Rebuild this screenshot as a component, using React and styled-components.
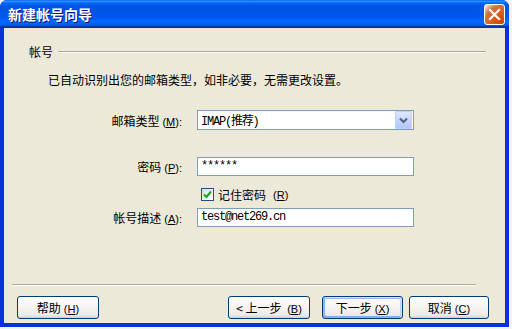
import styled, { createGlobalStyle } from 'styled-components';

const Global = createGlobalStyle`
  html, body { margin: 0; padding: 0; background: #f4f4f4; }
  body { font-family: "Noto Sans CJK SC", "Liberation Sans", sans-serif; font-size: 12px; color: #000; }
`;

function App() {
  return (<>
    <Global />
    <Window>
      <TitleBar>
        <Title>新建帐号向导</Title>
        <CloseButton aria-label="关闭">
          <svg width="13" height="13" viewBox="0 0 13 13">
            <path d="M2 2 L11 11 M11 2 L2 11" stroke="#fff" strokeWidth="2.2" strokeLinecap="square" />
          </svg>
        </CloseButton>
      </TitleBar>

      <Body>
        <GroupHeader>
          <GroupLabel>帐号</GroupLabel>
          <GroupLine />
        </GroupHeader>

        <Intro>已自动识别出您的邮箱类型，如非必要，无需更改设置。</Intro>

        <Form>
          <Row>
            <Label>邮箱类型<Key>(<u>M</u>):</Key></Label>
            <Select>
              <FieldText>IMAP(推荐)</FieldText>
              <DropButton>
                <svg width="9" height="7" viewBox="0 0 9 7">
                  <path d="M1 1.5 L4.5 5 L8 1.5" stroke="#4d6185" strokeWidth="2" fill="none" />
                </svg>
              </DropButton>
            </Select>
          </Row>

          <Row $top={26}>
            <Label>密码<Key>(<u>P</u>):</Key></Label>
            <Input><FieldText>******</FieldText></Input>
          </Row>

          <Row $top={12} $height={13}>
            <Label />
            <Check>
              <Box>
                <svg width="9" height="9" viewBox="0 0 9 9">
                  <path d="M1 4.5 L3.5 7 L8 1.5" stroke="#21a121" strokeWidth="2" fill="none" />
                </svg>
              </Box>
              记住密码<Key>(<u>R</u>)</Key>
            </Check>
          </Row>

          <Row $top={6}>
            <Label>帐号描述<Key>(<u>A</u>):</Key></Label>
            <Input><FieldText>test@net269.cn</FieldText></Input>
          </Row>
        </Form>

        <Separator />

        <Buttons>
          <Button>帮助<Key>(<u>H</u>)</Key></Button>
          <Spacer />
          <Button>&lt; 上一步 <Key>(<u>B</u>)</Key></Button>
          <Button $default $gap={12} $width={81}>下一步<Key>(<u>X</u>)</Key></Button>
          <Button $gap={6} $width={80}>取消<Key>(<u>C</u>)</Key></Button>
        </Buttons>
      </Body>
    </Window>
  </>);
}

export default App;


const Window = styled.div`
  width: 509px;
  height: 327px;
  display: flex;
  flex-direction: column;
  background: #0831d9;
  border-radius: 7px 7px 0 0;
  overflow: hidden;
`
const TitleBar = styled.div`
  height: 28px;
  flex: none;
  display: flex;
  align-items: center;
  justify-content: space-between;
  padding: 0 4px 0 8px;
  background: linear-gradient(180deg, #0058ee 0%, #3593ff 4%, #288eff 6%, #127dff 8%, #036ffc 10%, #0262ee 14%, #0057e5 20%, #0054e3 24%, #0055eb 56%, #005bf5 66%, #026afe 76%, #0062ef 86%, #0052d6 92%, #0040ab 94%, #003092 100%);
`
const Title = styled.span`
  color: #fff;
  font-weight: bold;
  font-size: 14px;
  text-shadow: 1px 1px #0f1089;
`
const CloseButton = styled.button`
  width: 21px;
  height: 21px;
  padding: 0;
  display: flex;
  align-items: center;
  justify-content: center;
  border: 1px solid #fff;
  border-radius: 3px;
  background: radial-gradient(circle at 90% 90%, #cc4600 0%, #dc6527 55%, #cd7546 70%, #ffccb2 90%, #fff 100%);
`
const Body = styled.div`
  flex: 1;
  margin: 0 4px 4px;
  background: #ece9d8;
  display: flex;
  flex-direction: column;
  padding-top: 17px;
`
const GroupHeader = styled.div`
  display: flex;
  align-items: center;
  height: 14px;
  padding: 0 19px 0 25px;
`
const GroupLabel = styled.span`
  line-height: 14px;
`
const GroupLine = styled.div`
  flex: 1;
  margin-left: 5px;
  border-top: 1px solid #aca899;
  border-bottom: 1px solid #fff;
`
const Intro = styled.p`
  margin: 14px 0 0 44px;
  line-height: 14px;
`
const Form = styled.div`
  margin-top: 23px;
  display: flex;
  flex-direction: column;
`
const Row = styled.div`
  display: flex;
  align-items: center;
  margin-top: ${p => p.$top || 0}px;
  height: ${p => p.$height || 20}px;
`
const Label = styled.span`
  width: 178px;
  margin-right: 15px;
  text-align: right;
  white-space: nowrap;
`
const Key = styled.span`
  margin-left: 3px;
  font-family: "Liberation Sans", sans-serif;
  font-size: 11px;
`
const Select = styled.div`
  width: 217px;
  height: 20px;
  box-sizing: border-box;
  border: 1px solid #7f9db9;
  background: #fff;
  display: flex;
  align-items: center;
  justify-content: space-between;
  padding: 0 1px 0 3px;
`
const Input = styled.div`
  width: 217px;
  height: 19px;
  box-sizing: border-box;
  border: 1px solid #7f9db9;
  background: #fff;
  display: flex;
  align-items: center;
  padding: 0 3px;
`
const FieldText = styled.span`
  font-family: "Liberation Mono", "Noto Sans CJK SC", monospace;
  font-size: 12px;
  letter-spacing: -1.2px;
`
const DropButton = styled.span`
  width: 15px;
  height: 16px;
  display: flex;
  align-items: center;
  justify-content: center;
  border: 1px solid #bad1fc;
  border-radius: 1px;
  background: linear-gradient(180deg, #dfe8fe 0%, #c6d6fc 50%, #b3c8f8 100%);
`
const Check = styled.label`
  display: flex;
  align-items: center;
  gap: 4px;
  margin-left: 4px;
`
const Box = styled.span`
  width: 13px;
  height: 13px;
  box-sizing: border-box;
  border: 1px solid #1c5180;
  background: linear-gradient(135deg, #dcdcd7, #fff);
  display: flex;
  align-items: center;
  justify-content: center;
`
const Separator = styled.div`
  margin: auto 29px 0 8px;
  border-top: 1px solid #aca899;
  border-bottom: 1px solid #fff;
`
const Buttons = styled.div`
  display: flex;
  align-items: center;
  padding: 10px 0 4px 13px;
`
const Spacer = styled.div`
  width: 129px;
`
const Button = styled.button`
  width: ${p => p.$width || 82}px;
  height: 23px;
  margin-left: ${p => p.$gap || 0}px;
  padding: 0;
  font-family: "Noto Sans CJK SC", sans-serif;
  font-size: 12px;
  color: #000;
  border: 1px solid #003c74;
  border-radius: 3px;
  background: linear-gradient(180deg, #fff 0%, #ecebe6 86%, #d6d0c5 100%);
  box-shadow: ${p => p.$default
    ? 'inset -1px 1px #cee7ff, inset 1px 2px #98b8ea, inset -2px 2px #bcd4f6, inset 1px -1px #89ade4, inset 2px -2px #89ade4'
    : 'none'};
`
